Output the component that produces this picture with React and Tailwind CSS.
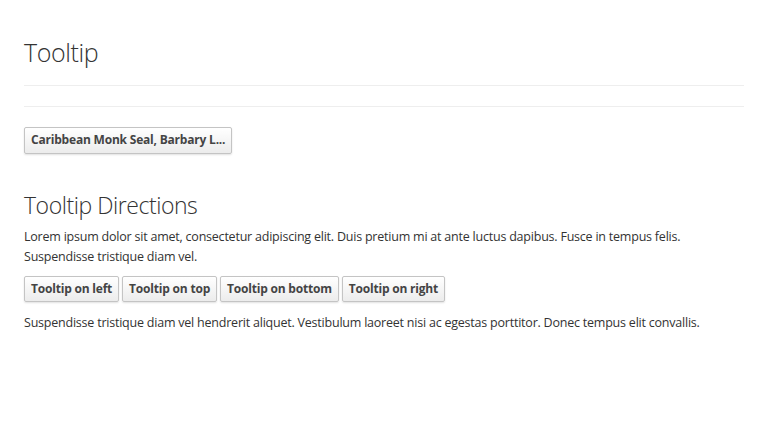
export default function App() {
  const btn =
    "h-[26px] px-[6px] border border-[#c4c4c4] rounded-[2px] bg-gradient-to-b from-white to-[#ececec] shadow-[0_1px_2px_rgba(0,0,0,0.12)] text-[12px] font-bold tracking-[-0.2px] text-[#444] leading-none";
  return (
    <div
      className="min-h-[443px] bg-white px-6 text-[#333]"
      style={{ fontFamily: '"Open Sans", sans-serif' }}
    >
      <h1 className="pt-[34px] text-[25px] font-light tracking-[-0.4px] leading-[36px] text-[#333]">Tooltip</h1>
      <div className="mt-[15px] border-t border-[#eee]" />
      <div className="mt-[20px] border-t border-[#eee]" />
      <div className="mt-[19px]">
        <button className={btn + " h-[27px]"}>Caribbean Monk Seal, Barbary L...</button>
      </div>
      <h2 className="mt-[35px] text-[23px] font-light tracking-[-0.45px] leading-[32px] text-[#333]">Tooltip Directions</h2>
      <p className="mt-[6px] text-[12.5px] tracking-[-0.22px] leading-[20px]">
        Lorem ipsum dolor sit amet, consectetur adipiscing elit. Duis pretium mi at ante luctus dapibus. Fusce in tempus felis.
        <br />
        Suspendisse tristique diam vel.
      </p>
      <div className="mt-[9px] flex gap-[3px]">
        <button className={btn}>Tooltip on left</button>
        <button className={btn}>Tooltip on top</button>
        <button className={btn}>Tooltip on bottom</button>
        <button className={btn}>Tooltip on right</button>
      </div>
      <p className="mt-[11px] text-[12.5px] tracking-[-0.22px] leading-[20px]">
        Suspendisse tristique diam vel hendrerit aliquet. Vestibulum laoreet nisi ac egestas porttitor. Donec tempus elit convallis.
      </p>
    </div>
  );
}
